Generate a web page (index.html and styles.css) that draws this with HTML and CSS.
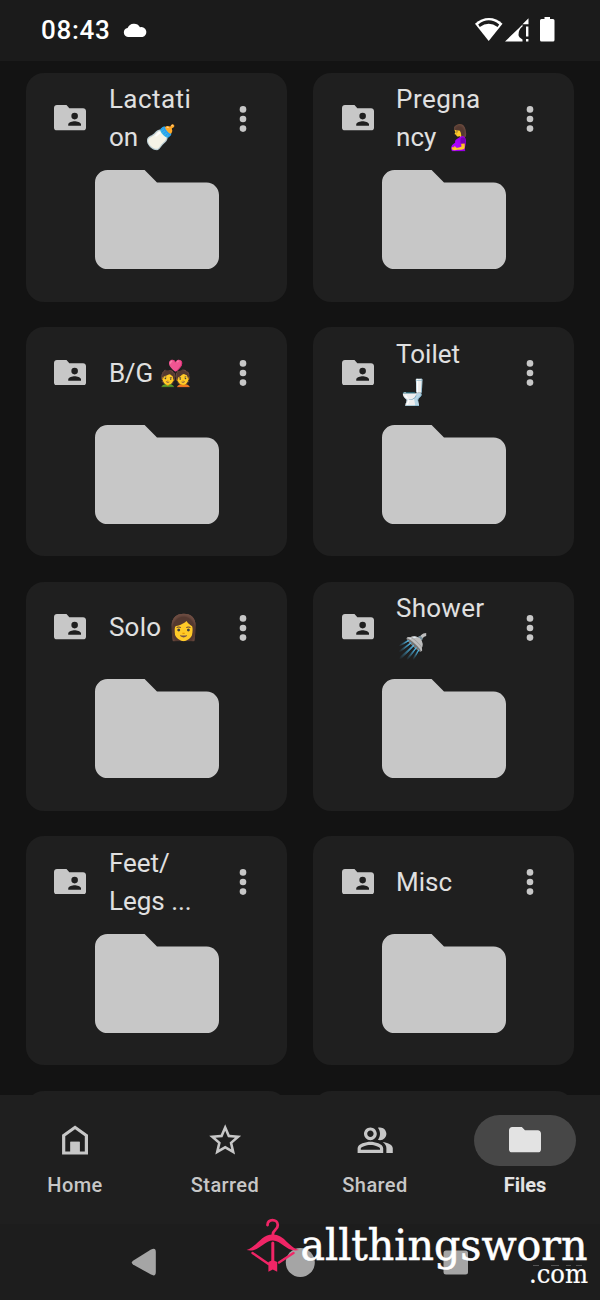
FILE: index.html
```
<!DOCTYPE html>
<html lang="en">
<head>
<meta charset="utf-8">
<title>Files</title>
<link rel="stylesheet" href="styles.css">
</head>
<body>
<svg class="defs" width="0" height="0">
  <symbol id="folder" viewBox="2 4 20 16"><path d="M10 4H4c-1.1 0-2 .9-2 2v12c0 1.1.9 2 2 2h16c1.1 0 2-.9 2-2V8c0-1.1-.9-2-2-2h-8l-2-2z"/></symbol>
  <symbol id="shared" viewBox="2 4 20 16"><path d="M20.200 6h-8.600L9.800 4H3.800C2.800 4 2 4.800 2 5.800v12.400c0 1 .8 1.800 1.800 1.800h16.400c1 0 1.800-.8 1.800-1.800V7.800c0-1-.8-1.800-1.800-1.800zM14.900 8.900a2 2 0 1 1 0 4.100 2 2 0 0 1 0-4.100zM18.900 17h-8v-.9c0-1.330 2.670-2 4-2s4 .67 4 2v.9z"/></symbol>
  <symbol id="more" viewBox="0 0 8 26"><circle cx="4" cy="3.400" r="3.300"/><circle cx="4" cy="13" r="3.300"/><circle cx="4" cy="22.600" r="3.300"/></symbol>
</svg>
<div class="screen">
  <header class="status">
    <span class="time">08:43</span>
    <svg class="cloud" viewBox="0 0 24 14"><path d="M5 14a4.600 4.600 0 0 1-.4-9.100A7 7 0 0 1 17 4.200 5 5 0 0 1 19.500 14z"/></svg>
    <svg class="signals" viewBox="0 0 80 26">
      <path d="M0 6.700C8-1 20-1 27.500 6.700L13.700 24z"/><path class="cut" d="M3.200 7.500Q13.700-.8 24.200 7.500L22.600 10Q13.700 3.400 4.800 10z"/>
      <path d="M30 24.500 43 12 47.500 7.500V9.500Q43.500 12 43.500 18 43.500 20 47.500 22.500V24.500zM47.500 7.200 53.500 1.200V7.200zM51 9.500h2.400v10H51zM51 22h2.400v2.500H51z"/>
      <path d="M69.500 0h5.500v2h3q1.500 0 1.500 1.500v19.500q0 1.500-1.500 1.500H66.500q-1.500 0-1.500-1.500V3.500Q65 2 66.500 2h3z"/>
    </svg>
  </header>
  <main class="grid">
    <article class="card"><div class="head"><svg class="type"><use href="#shared"/></svg><h2 class="name"><span class="l1">Lactati</span><br>on <span class="emoji">🍼</span></h2><svg class="more"><use href="#more"/></svg></div><svg class="big"><use href="#folder"/></svg></article>
    <article class="card"><div class="head"><svg class="type"><use href="#shared"/></svg><h2 class="name"><span class="l1">Pregna</span><br>ncy <span class="emoji">🤰</span></h2><svg class="more"><use href="#more"/></svg></div><svg class="big"><use href="#folder"/></svg></article>
    <article class="card"><div class="head"><svg class="type"><use href="#shared"/></svg><h2 class="name"><span class="tight">B/G</span> <span class="emoji">💑</span></h2><svg class="more"><use href="#more"/></svg></div><svg class="big"><use href="#folder"/></svg></article>
    <article class="card"><div class="head"><svg class="type"><use href="#shared"/></svg><h2 class="name">Toilet<br><span class="emoji">🚽</span></h2><svg class="more"><use href="#more"/></svg></div><svg class="big"><use href="#folder"/></svg></article>
    <article class="card"><div class="head"><svg class="type"><use href="#shared"/></svg><h2 class="name"><span class="l2">Solo</span> <span class="emoji">👩</span></h2><svg class="more"><use href="#more"/></svg></div><svg class="big"><use href="#folder"/></svg></article>
    <article class="card"><div class="head"><svg class="type"><use href="#shared"/></svg><h2 class="name"><span class="l2">Shower</span><br><span class="emoji">🚿</span></h2><svg class="more"><use href="#more"/></svg></div><svg class="big"><use href="#folder"/></svg></article>
    <article class="card"><div class="head"><svg class="type"><use href="#shared"/></svg><h2 class="name">Feet/<br>Legs ...</h2><svg class="more"><use href="#more"/></svg></div><svg class="big"><use href="#folder"/></svg></article>
    <article class="card"><div class="head"><svg class="type"><use href="#shared"/></svg><h2 class="name">Misc</h2><svg class="more"><use href="#more"/></svg></div><svg class="big"><use href="#folder"/></svg></article>
    <article class="card"></article>
    <article class="card"></article>
  </main>
  <nav class="tabs">
    <a class="tab"><span class="pill"><svg class="ico" viewBox="0 0 24 24"><path d="M3.800 21V8.600L11.900 2.800l8.100 5.800V21zM5.800 19H9v-6h5.800v6H18V9.600l-6.100-4.400-6.100 4.400z" fill-rule="evenodd"/><path d="M9 13h5.800v7H9z"/></svg></span><span class="label">Home</span></a>
    <a class="tab"><span class="pill"><svg class="ico" viewBox="0 0 24 24"><path d="M22 9.240l-7.190-.62L12 2 9.190 8.630 2 9.240l5.460 4.730L5.820 21 12 17.270 18.180 21l-1.630-7.030L22 9.240zM12 15.400l-3.760 2.270 1-4.280-3.320-2.880 4.380-.38L12 6.100l1.710 4.040 4.380.38-3.320 2.880 1 4.280L12 15.400z"/></svg></span><span class="label">Starred</span></a>
    <a class="tab"><span class="pill"><svg class="ico" viewBox="0 0 24 24"><path d="M16.670 13.130C18.040 14.060 19 15.320 19 17v3h4v-3c0-2.180-3.570-3.470-6.330-3.870zM15 12c2.210 0 4-1.790 4-4s-1.790-4-4-4c-.47 0-.91.1-1.330.24C14.500 5.270 15 6.580 15 8s-.5 2.730-1.330 3.760c.42.14.86.24 1.330.24zM9 12c2.210 0 4-1.790 4-4s-1.790-4-4-4-4 1.790-4 4 1.790 4 4 4zm0-6c1.100 0 2 .9 2 2s-.9 2-2 2-2-.9-2-2 .9-2 2-2zm0 7c-2.670 0-8 1.340-8 4v3h16v-3c0-2.660-5.330-4-8-4zm6 5H3v-.99C3.200 16.290 6.300 15 9 15s5.800 1.290 6 2v1z"/></svg></span><span class="label">Shared</span></a>
    <a class="tab active"><span class="pill"><svg class="files"><use href="#folder"/></svg></span><span class="label">Files</span></a>
  </nav>
  <footer class="system">
    <svg viewBox="0 0 600 77">
      <path class="key" d="M133 36.800 151 25.600Q155.800 23 155.800 28V48Q155.800 53 151 50.600L133 40.400Q130.600 38.600 133 36.800z"/>
      <circle class="key" cx="300.300" cy="38.500" r="14.500"/>
      <rect class="key" x="443.500" y="26.500" width="24.500" height="24" rx="2.500"/>
    </svg>
  </footer>
  <svg class="mark" viewBox="240 1210 360 90">
    <g class="bow">
      <path class="line" stroke-width="2.800" d="M267.500 1225C267 1218.500 277.800 1218.500 277.800 1225C277.800 1230.500 272.800 1229 272.800 1235"/>
      <path d="M246.500 1250C257 1247 261 1234.500 272.800 1234.500S288 1247 299 1250C287 1253 282 1240.500 272.800 1240.500S259 1253 246.500 1250z"/>
      <path class="line" stroke-width="3" d="M272.800 1243v20"/>
      <path class="line" stroke-width="2.400" d="M252.500 1253 268.500 1264M293.500 1253 279 1262.500"/>
      <path d="M268.400 1262 272.800 1260 277.200 1262V1271.800L272.800 1269.500 268.400 1271.800z"/>
    </g>
    <text class="word" x="300.500" y="1259.500" textLength="287" lengthAdjust="spacingAndGlyphs">allthingsworn</text>
    <text class="com" x="529" y="1282.700" textLength="59" lengthAdjust="spacingAndGlyphs">.com</text>
    <path class="trace" d="M533 1265.500h6M551 1265.500h8M566 1265.500h5M576 1265.500h6"/>
  </svg>
</div>
</body>
</html>
```
FILE: styles.css
```
* { box-sizing: border-box; }
body { margin: 0; background: #131313; font-family: "Roboto", "Noto Color Emoji", sans-serif; }
.defs { position: absolute; }
.screen { position: relative; width: 600px; height: 1300px; overflow: hidden; display: flex; flex-direction: column; }
svg { display: block; flex: none; }

.status { height: 60.500px; flex: none; background: #1b1b1b; display: flex; align-items: center; padding: 0 45px 0 41px; color: #fff; }
.time { font-size: 26px; font-weight: 500; letter-spacing: 0.700px; width: 82px; }
.cloud { width: 24px; height: 14px; fill: #fff; }
.signals { width: 80px; height: 26px; margin-left: auto; fill: #fff; }
.signals .cut { fill: #1b1b1b; }

.grid { flex: 1; min-height: 0; overflow: hidden; display: grid; grid-template-columns: 1fr 1fr; grid-auto-rows: 228.800px; gap: 25.700px; padding: 12.300px 25.700px 0; }
.card { background: #1f1f1f; border-radius: 18px; display: flex; flex-direction: column; align-items: center; }
.head { width: 100%; height: 91.500px; display: flex; align-items: center; padding: 0 40.500px 0 28.700px; }
.type { width: 32px; height: 25.600px; fill: #c7c7c7; position: relative; top: -0.600px; }
.name { margin: 1px 0 0 22.500px; width: 104px; font-size: 26px; font-weight: 400; line-height: 37.700px; color: #e0e0e0; white-space: nowrap; }
.l1 { letter-spacing: 0.450px; }
.l2 { letter-spacing: 0.250px; }
.tight { letter-spacing: -0.200px; }
.emoji { font-size: 25px; line-height: 1; margin-left: 1px; }
.more { width: 8px; height: 26px; margin-left: auto; fill: #c7c7c7; }
.big { width: 124px; height: 99.200px; margin: 6px 0 0 0.800px; fill: #c7c7c7; }

.tabs { height: 128.500px; flex: none; background: #1f1f1f; display: grid; grid-template-columns: repeat(4, 1fr); }
.tab { display: flex; flex-direction: column; align-items: center; padding-top: 19.500px; color: #c7c7c7; fill: #c7c7c7; }
.pill { width: 102px; height: 51px; border-radius: 26px; display: flex; align-items: center; justify-content: center; }
.ico { width: 38.400px; height: 38.400px; }
.files { width: 32px; height: 25.600px; }
.label { margin-top: 7px; font-size: 20px; line-height: 24px; font-weight: 500; letter-spacing: 0.400px; }
.active { color: #e3e3e3; fill: #e3e3e3; }
.active .pill { background: #474747; }
.active .label { font-weight: 700; letter-spacing: 0; }

.system { height: 76.500px; flex: none; background: #1d1d1d; }
.key { fill: #a5a5a5; }
.mark { position: absolute; left: 240px; top: 1210px; width: 360px; height: 90px; }
.bow { fill: #f02566; }
.line { fill: none; stroke: #f02566; stroke-linecap: round; }
.word, .com { fill: #fff; font-family: "DejaVu Serif Condensed", "DejaVu Serif", serif; font-stretch: condensed; }
.word { font-size: 42px; stroke: #fff; stroke-width: 0.500px; }
.com { font-size: 26px; stroke: #fff; stroke-width: 0.200px; }
.trace { stroke: #555; stroke-width: 1; }
```
